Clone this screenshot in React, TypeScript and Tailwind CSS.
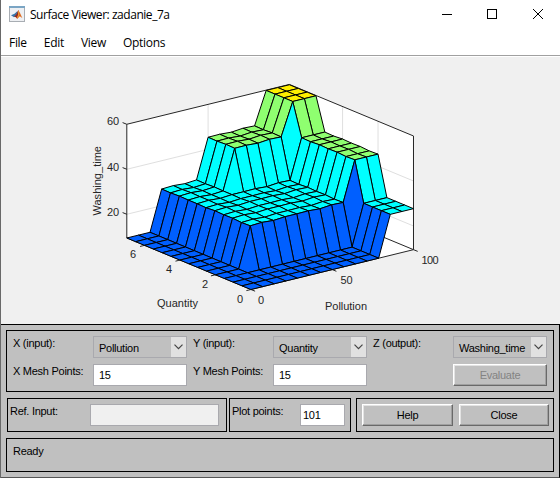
import type { ReactNode } from "react";

const ORIGIN = [250.7, 289.5];
const P_STEP = [11.614, -2.845];
const Q_STEP = [-8.864, -3.68];
const N = 14;

type Pt = [number, number];

function project(p: number, q: number, h: number): Pt {
  return [
    ORIGIN[0] + P_STEP[0] * p + Q_STEP[0] * q,
    ORIGIN[1] + P_STEP[1] * p + Q_STEP[1] * q - h,
  ];
}

// Terrace index reached by the surface at a mesh vertex.
function level(p: number, q: number): number {
  if (p >= 12) return q >= 11 ? 3 : q >= 4 ? 2 : 1;
  if (q < 4 || p < 3) return 0;
  return p >= 7 && q >= 11 ? 2 : 1;
}

const HEIGHTS = [0, 41, 80.8, 113.4];
const COLORS = ["#005fff", "#00ffff", "#8fff70", "#ffef00"];

function ripple(p: number, q: number): number {
  if (level(p, q) === 0 || level(p, q) === 3) return 0;
  const dp = [0, 0, 0, -0.6, 0, -0.9, 0, 0, 0.2, -0.6, 0.5, 0, 0, 0, 0][p];
  const dq = [0, 0, 0, 0, 0, -0.4, 0.3, 0, 0.4, -0.3, 0, 0, 0.3, -0.2, 0][q];
  return dp + dq;
}

const vertex = (p: number, q: number) =>
  project(p, q, HEIGHTS[level(p, q)] + ripple(p, q));

const pts = (list: Pt[]) => list.map((v) => v.map((n) => n.toFixed(2)).join(",")).join(" ");

const cells: { points: string; fill: string }[] = [];
for (let p = N - 1; p >= 0; p--) {
  for (let q = N - 1; q >= 0; q--) {
    cells.push({
      points: pts([vertex(p, q), vertex(p + 1, q), vertex(p + 1, q + 1), vertex(p, q + 1)]),
      fill: COLORS[level(p, q)],
    });
  }
}

function Line({ a, b, color = "#262626" }: { a: Pt; b: Pt; color?: string }) {
  return <line x1={a[0]} y1={a[1]} x2={b[0]} y2={b[1]} stroke={color} strokeWidth={1} />;
}

const TOP = 113.7;

function SurfacePlot() {
  const axisText = "fill-[#262626] text-[11px]";
  const shift = (a: Pt, dx: number, dy: number): Pt => [a[0] + dx, a[1] + dy];
  return (
    <svg viewBox="1 57 558 267" className="block h-[267px] w-full font-['Liberation_Sans',Arial,sans-serif]">
      <g transform="translate(-0.3 0)">
        <polygon
          fill="#fff"
          points={pts([project(0, 0, 0), project(14, 0, 0), project(14, 0, TOP), project(14, 14, TOP), project(0, 14, TOP), project(0, 14, 0)])}
        />
        {[4, 8, 12].map((q) => (
          <Line key={q} a={project(14, q, 0)} b={project(14, q, TOP)} color="#dfdfdf" />
        ))}
        <Line a={project(7, 14, 0)} b={project(7, 14, TOP)} color="#dfdfdf" />
        {[23.7, 68.7].map((h) => (
          <g key={h}>
            <Line a={project(0, 14, h)} b={project(14, 14, h)} color="#dfdfdf" />
            <Line a={project(14, 14, h)} b={project(14, 0, h)} color="#dfdfdf" />
          </g>
        ))}
        <Line a={project(0, 14, TOP)} b={project(14, 14, TOP)} />
        <Line a={project(14, 14, TOP)} b={project(14, 0, TOP)} />
        <Line a={project(14, 0, TOP)} b={project(14, 0, 0)} />
        <Line a={project(14, 14, 0)} b={project(14, 0, 0)} />
        <Line a={project(0, 14, 0)} b={project(0, 14, TOP)} />
        <Line a={project(0, 0, 0)} b={project(14, 0, 0)} />
        <Line a={project(0, 0, 0)} b={project(0, 14, 0)} />
        {[0, 7, 14].map((p) => (
          <Line key={p} a={project(p, 0, 0)} b={shift(project(p, 0, 0), 4.2, 1.7)} />
        ))}
        {[0, 4, 8, 12].map((q) => (
          <Line key={q} a={project(0, q, 0)} b={shift(project(0, q, 0), -4.5, 1.1)} />
        ))}
        {[23.7, 68.7, TOP].map((h) => (
          <Line key={h} a={project(0, 14, h)} b={shift(project(0, 14, h), -4.2, -1.7)} />
        ))}
        <g stroke="#000" strokeWidth={1} strokeLinejoin="round">
          {cells.map((c, i) => (
            <polygon key={i} points={c.points} fill={c.fill} />
          ))}
        </g>
      </g>
      <g className={axisText}>
        <text x={106.5} y={125}>60</text>
        <text x={106.5} y={171}>40</text>
        <text x={106.5} y={216}>20</text>
        <text x={129.5} y={258}>6</text>
        <text x={165.5} y={273}>4</text>
        <text x={201.5} y={288}>2</text>
        <text x={236.5} y={303}>0</text>
        <text x={257.5} y={304}>0</text>
        <text x={340} y={284}>50</text>
        <text x={421} y={264} textLength={17}>100</text>
        <text x={156.500} y={307} textLength={41}>Quantity</text>
        <text x={324.500} y={310} textLength={42}>Pollution</text>
        <text transform="translate(100 215.5) rotate(-90)" textLength={69.5}>Washing_time</text>
      </g>
    </svg>
  );
}

function Label({ children, className = "" }: { children: ReactNode; className?: string }) {
  return <div className={`whitespace-nowrap leading-[13px] ${className}`}>{children}</div>;
}

function Select({ value }: { value: string }) {
  return (
    <div className="flex h-[22px] w-[94px] border border-[#a9a9ae]">
      <span className="flex-1 whitespace-nowrap pl-[5px] leading-[22px]">{value}</span>
      <span className="flex w-[15px] shrink-0 items-center justify-center bg-[#e1e1e1]">
        <svg viewBox="0 0 9 6" className="h-[6px] w-[9px]" fill="none" stroke="#444" strokeWidth="1.2">
          <path d="M.5 .7 4.5 4.7 8.500 .7" />
        </svg>
      </span>
    </div>
  );
}

function Field({ value, className }: { value: string; className: string }) {
  return (
    <div className={`h-[22px] border border-[#a9a9ae] leading-[21px] ${className}`}>{value}</div>
  );
}

function Button({ children, className }: { children: ReactNode; className: string }) {
  return (
    <button
      className={`h-[22px] border border-b-[#696969] border-l-white border-r-[#696969] border-t-white text-center leading-[20px] shadow-[inset_-1px_-1px_0_#a0a0a0,inset_1px_1px_0_#e3e3e3] ${className}`}
    >
      {children}
    </button>
  );
}

function InputGroup({ axis, kind, value, mesh }: { axis: string; kind: string; value: string; mesh: boolean }) {
  return (
    <div className="flex w-[174px] justify-between">
      <div className="flex w-[80px] flex-col gap-[15px] pt-px">
        <Label>{axis} ({kind}):</Label>
        {mesh && <Label>{axis} Mesh Points:</Label>}
      </div>
      <div className="flex flex-col gap-[6px]">
        <Select value={value} />
        {mesh ? (
          <Field value="15" className="w-[94px] bg-white pl-[5px]" />
        ) : (
          <Button className="w-[94px] text-[#838383]">Evaluate</Button>
        )}
      </div>
    </div>
  );
}

function MatlabIcon() {
  return (
    <svg viewBox="0 0 16 16" className="h-4 w-4">
      <rect x=".5" y=".5" width="15" height="15" fill="#eef0f3" stroke="#a8adb3" />
      <path d="M0 0h16v2H0z" fill="#7aa5c4" />
      <path d="M2 9.300 5.500 7.700 8.500 5 7.500 9 5 11.300z" fill="#3974a8" />
      <path d="M5 11 7.500 8 9.300 4 10.500 8 8 12.500 6.500 11z" fill="#8e2a22" />
      <path d="M9.300 4 11 7 13.300 12 10.800 10.300 8.200 13 7.500 11.500 9 9z" fill="#df6b20" />
      <path d="M9.600 5.500 9.700 9 8.600 11.500" fill="none" stroke="#f5b23c" strokeWidth=".7" />
    </svg>
  );
}

export default function App() {
  return (
    <div className="flex h-[478px] w-[560px] flex-col overflow-hidden border-l border-[#696969] bg-[#f0f0f0] text-black">
      <div className="flex h-[31px] shrink-0 items-start bg-white pl-2 pt-[6px] font-['Open_Sans','Noto_Sans',sans-serif] text-[12px]">
        <MatlabIcon />
        <span className="ml-[5px] w-[141px] whitespace-nowrap leading-[18px] tracking-[-0.46px]">Surface Viewer: zadanie_7a</span>
        <svg viewBox="0 0 103 11" className="ml-auto mr-4 mt-[2px] h-[11px] w-[103px]" fill="none" stroke="#000" shapeRendering="crispEdges">
          <path d="M1 6.500h10M46.500 1.500h9v9h-9z" />
          <path d="M92 1 102 11M102 1 92 11" shapeRendering="auto" />
        </svg>
      </div>
      <div className="flex h-[25px] shrink-0 gap-[17px] border-b border-[#a0a0a0] bg-white pl-2 pt-[3px] font-['Open_Sans','Noto_Sans',sans-serif] text-[12px] leading-[18px] tracking-[-0.3px]">
        <span>File</span>
        <span>Edit</span>
        <span>View</span>
        <span>Options</span>
      </div>
      <div className="h-px shrink-0 bg-white" />
      <SurfacePlot />
      <div className="h-[154px] border-b border-r border-t border-b-[#555] border-r-black border-t-black bg-[#c0c0c0] pl-[5px] pt-[5px] font-['Liberation_Sans',Arial,sans-serif] text-[11px] tracking-[-0.27px]">
        <div className="flex h-[62px] w-[548px] gap-[6px] border border-black pl-[6px] pt-[5px]">
          <InputGroup axis="X" kind="input" value="Pollution" mesh />
          <InputGroup axis="Y" kind="input" value="Quantity" mesh />
          <InputGroup axis="Z" kind="output" value="Washing_time" mesh={false} />
        </div>
        <div className="mt-[6px] flex h-[34px] pl-px">
          <div className="flex w-[220px] justify-between border border-black pl-[2px] pr-[7px] pt-[5px]">
            <Label className="pt-px">Ref. Input:</Label>
            <Field value="" className="w-[129px] bg-[#f0f0f0]" />
          </div>
          <div className="ml-[2px] flex w-[122px] justify-between border border-black pl-[2px] pr-[5px] pt-[5px]">
            <Label className="pt-px">Plot points:</Label>
            <Field value="101" className="w-[45px] bg-white pl-[2px]" />
          </div>
          <div className="ml-[5px] flex w-[198px] gap-[6px] border border-black pl-[5px] pt-[5px]">
            <Button className="w-[91px]">Help</Button>
            <Button className="w-[90px]">Close</Button>
          </div>
        </div>
        <div className="mt-[6px] h-[34px] w-[548px] border border-black pl-[6px] pt-[6px]">
          <Label>Ready</Label>
        </div>
      </div>
    </div>
  );
}
